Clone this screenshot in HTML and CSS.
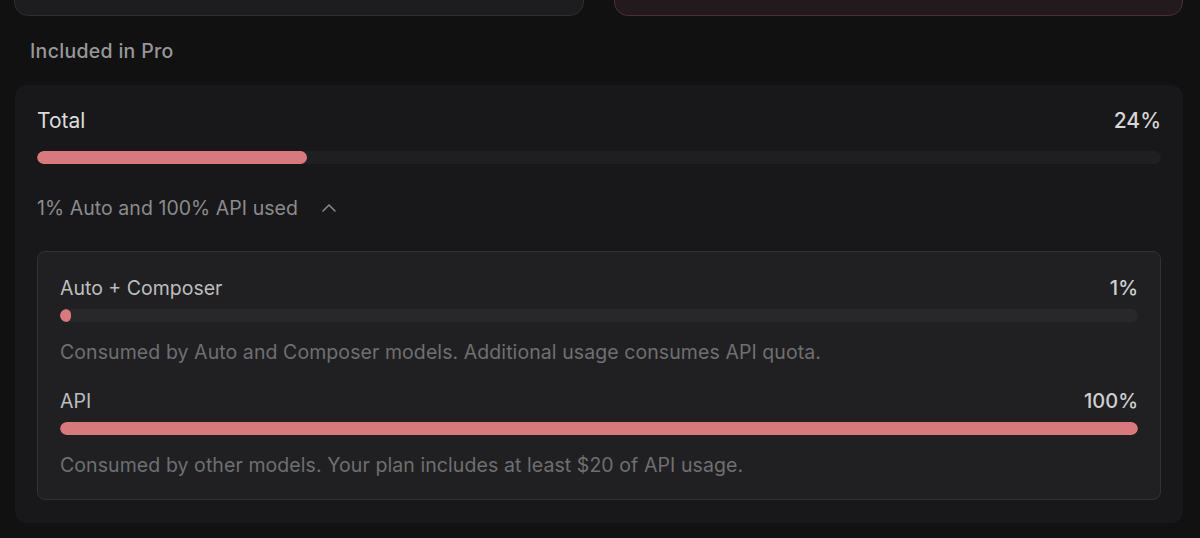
FILE: index.html
```html
<!DOCTYPE html>
<html lang="en">
<head>
<meta charset="utf-8">
<title>Usage</title>
<link rel="stylesheet" href="styles.css">
</head>
<body>
<div class="page">
  <div class="top-cards">
    <div class="top-card"></div>
    <div class="top-card top-card--alert"></div>
  </div>
  <div class="section-label">Included in Pro</div>
  <div class="card">
    <div class="row">
      <span class="title">Total</span>
      <span class="pct pct--lg">24%</span>
    </div>
    <div class="bar bar--outer"><div class="fill" style="width:24%"></div></div>
    <div class="toggle">
      <span>1% Auto and 100% API used</span>
      <svg class="chev" width="14" height="14" viewBox="0 0 14 14" fill="none"><path d="M1 10 L7 4 L13 10" stroke="currentColor" stroke-width="1.5" stroke-linecap="round" stroke-linejoin="round"/></svg>
    </div>
    <div class="inner">
      <div class="row">
        <span class="sub-title">Auto + Composer</span>
        <span class="pct">1%</span>
      </div>
      <div class="bar"><div class="fill fill--min" style="width:1%"></div></div>
      <div class="desc">Consumed by Auto and Composer models. Additional usage consumes API quota.</div>
      <div class="row row--spaced">
        <span class="sub-title">API</span>
        <span class="pct">100%</span>
      </div>
      <div class="bar"><div class="fill" style="width:100%"></div></div>
      <div class="desc">Consumed by other models. Your plan includes at least $20 of API usage.</div>
    </div>
  </div>
</div>
</body>
</html>
```

FILE: styles.css
```css
* { box-sizing: border-box; }
html, body { margin: 0; padding: 0; }
body {
  background: #111112;
  font-family: Inter, "Noto Sans", sans-serif;
  color: #d8d8d8;
  height: 538px;
  overflow: hidden;
}
.page {
  padding: 0 17px 0 15px;
}
.top-cards {
  display: grid;
  grid-template-columns: 1fr 1fr;
  gap: 30px;
  margin-top: -44px;
  margin-left: -1px;
}
.top-card {
  height: 60px;
  background: #1d1d1f;
  border: 1px solid #2e2e30;
  border-radius: 14px;
}
.top-card--alert {
  background: #221a1c;
  border-color: #4e2e32;
}
.section-label {
  padding-left: 15px;
  margin-top: 23px;
  height: 24px;
  line-height: 24px;
  font-size: 19.5px;
  font-weight: 500;
  letter-spacing: 0.3px;
  color: #979799;
}
.card {
  margin-top: 22px;
  background: #18181a;
  border-radius: 12px;
  padding: 24px 22px 23px;
}
.row {
  display: flex;
  justify-content: space-between;
  align-items: center;
  height: 24px;
  line-height: 24px;
}
.title {
  font-size: 21px;
  color: #dcdcdc;
}
.pct {
  font-size: 20px;
  font-weight: 500;
  color: #cfcfcf;
}
.pct--lg { font-size: 21px; color: #d6d6d6; }
.bar {
  margin-top: 9px;
  height: 13px;
  border-radius: 7px;
  background: #28282b;
  overflow: hidden;
}
.bar--outer {
  margin-top: 18px;
  background: #1f1f22;
}
.fill {
  height: 100%;
  background: #d8797e;
  border-radius: 7px;
}
.fill--min { min-width: 11px; }
.toggle {
  margin-top: 32px;
  height: 24px;
  line-height: 24px;
  display: flex;
  align-items: center;
  gap: 24px;
  font-size: 19.5px;
  letter-spacing: 0.05px;
  color: #8b8b8d;
}
.chev { color: #8b8b8d; }
.inner {
  margin-top: 31px;
  background: #202022;
  border: 1px solid #323235;
  border-radius: 8px;
  padding: 24px 22px 22px;
}
.sub-title {
  font-size: 19.5px;
  color: #bdbdbf;
}
.desc {
  margin-top: 18px;
  height: 24px;
  line-height: 24px;
  font-size: 19.5px;
  letter-spacing: 0.08px;
  color: #6f6f71;
}
.row--spaced { margin-top: 25px; }
```
